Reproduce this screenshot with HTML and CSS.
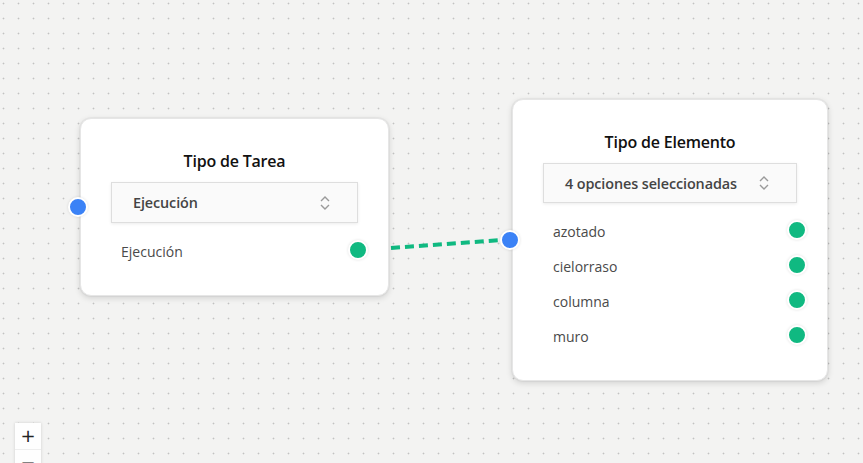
FILE: index.html
```html
<!DOCTYPE html>
<html lang="es">
<head>
<meta charset="utf-8">
<title>Flujo</title>
<link rel="stylesheet" href="styles.css">
</head>
<body>
<div class="canvas">
  <svg class="edges" width="863" height="463" viewBox="0 0 863 463">
    <path d="M 391 248 L 502 240" class="edge"/>
  </svg>

  <div class="node node-tarea">
    <span class="handle handle-in"></span>
    <div class="node-title">Tipo de Tarea</div>
    <div class="select">
      <span class="select-text">Ejecución</span>
      <svg class="chev" width="12" height="18" viewBox="0 0 12 18"><path d="M2 7 L6 3 L10 7 M2 11 L6 15 L10 11" fill="none" stroke="#9a9a9a" stroke-width="1.4"/></svg>
    </div>
    <div class="rows">
      <div class="row">Ejecución<span class="handle handle-out"></span></div>
    </div>
  </div>

  <div class="node node-elemento">
    <span class="handle handle-in"></span>
    <div class="node-title">Tipo de Elemento</div>
    <div class="select">
      <span class="select-text">4 opciones seleccionadas</span>
      <svg class="chev" width="12" height="18" viewBox="0 0 12 18"><path d="M2 7 L6 3 L10 7 M2 11 L6 15 L10 11" fill="none" stroke="#9a9a9a" stroke-width="1.4"/></svg>
    </div>
    <div class="rows">
      <div class="row">azotado<span class="handle handle-out"></span></div>
      <div class="row">cielorraso<span class="handle handle-out"></span></div>
      <div class="row">columna<span class="handle handle-out"></span></div>
      <div class="row">muro<span class="handle handle-out"></span></div>
    </div>
  </div>

  <div class="controls">
    <button class="ctrl">+</button>
    <button class="ctrl">−</button>
  </div>
</div>
</body>
</html>
```
FILE: styles.css
```css
* { box-sizing: border-box; }
html, body {
  margin: 0;
  padding: 0;
  width: 863px;
  height: 463px;
  overflow: hidden;
}
body {
  font-family: "Open Sans", "Noto Sans", "Liberation Sans", sans-serif;
  background: #f3f3f2;
}
.canvas {
  position: relative;
  width: 863px;
  height: 463px;
  background-color: #f3f3f2;
  background-image: radial-gradient(circle, #c2c2c2 0.8px, transparent 1.1px);
  background-size: 15px 15px;
  background-position: -4px -4px;
  overflow: hidden;
}
.edges {
  position: absolute;
  left: 0;
  top: 0;
}
.edge {
  fill: none;
  stroke: #10b981;
  stroke-width: 4;
  stroke-dasharray: 9 5;
}
.node {
  position: absolute;
  background: #fff;
  border: 1px solid #e6e6e6;
  border-radius: 11px;
  box-shadow: 0 2px 6px rgba(0, 0, 0, 0.14), 0 0 0 1px rgba(0,0,0,0.03);
  padding: 31px 30px 27px;
  display: flex;
  flex-direction: column;
}
.node-tarea { left: 80px; top: 118px; width: 309px; height: 178px; }
.node-elemento { left: 512px; top: 99px; width: 316px; height: 282px; }
.node-title {
  text-align: center;
  font-size: 16px;
  font-weight: 600;
  color: #111;
  line-height: 22px;
  letter-spacing: -0.2px;
}
.select {
  margin-top: 10px;
  height: 41px;
  background: #fafafa;
  border: 1px solid #dedede;
  box-shadow: 0 1px 3px rgba(0,0,0,0.08);
  display: flex;
  align-items: center;
  justify-content: space-between;
  padding: 0 26px 0 21px;
}
.select-text {
  font-size: 14.4px;
  font-weight: 600;
  color: #444;
  letter-spacing: -0.1px;
}
.chev { display: block; }
.rows {
  margin-top: 10px;
  display: flex;
  flex-direction: column;
}
.row {
  position: relative;
  height: 35px;
  display: flex;
  align-items: center;
  padding-left: 10px;
  padding-top: 2px;
  font-size: 14px;
  color: #4a4a4a;
}
.handle {
  position: absolute;
  width: 20px;
  height: 20px;
  border-radius: 50%;
  border: 2px solid #fff;
  box-shadow: 0 0 3px rgba(0,0,0,0.12);
}
.handle-out {
  background: #10b981;
  right: -10px;
  top: 7px;
}
.handle-in {
  background: #3b82f6;
  left: -13px;
  top: calc(50% - 10px);
}
.controls {
  position: absolute;
  left: 15px;
  top: 423px;
  display: flex;
  flex-direction: column;
  box-shadow: 0 0 3px rgba(0,0,0,0.15);
}
.ctrl {
  width: 26px;
  height: 27px;
  border: none;
  border-bottom: 1px solid #eee;
  background: #fefefe;
  font-family: "DejaVu Sans", sans-serif;
  font-size: 18px;
  line-height: 1;
  color: #222;
  padding: 0;
  display: flex;
  align-items: center;
  justify-content: center;
}
```
